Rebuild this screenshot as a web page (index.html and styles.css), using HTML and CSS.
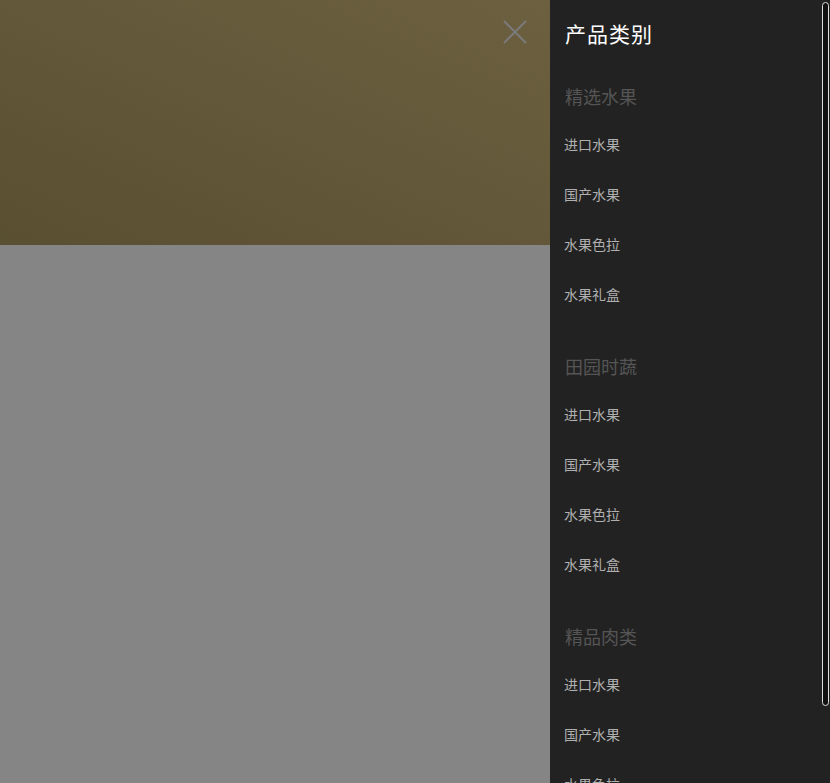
FILE: index.html
```html
<!DOCTYPE html>
<html lang="zh-CN">
<head>
    <meta charset="UTF-8">
    <meta name="viewport" content="width=device-width, initial-scale=1.0">
    <title>产品类别</title>
    <link rel="stylesheet" href="styles.css">
</head>
<body>
    <div class="page">
        <div class="backdrop">
            <div class="banner"></div>
            <div class="filler"></div>
            <button class="close-btn" type="button" aria-label="关闭">
                <svg width="26" height="26" viewBox="0 0 26 26">
                    <path d="M2 2 L24 24 M24 2 L2 24" stroke="#7a7a7a" stroke-width="2" fill="none"/>
                </svg>
            </button>
        </div>

        <div class="sidebar">
            <h2 class="side-title">产品类别</h2>

            <div class="group">
                <h3 class="group-title">精选水果</h3>
                <a class="item" href="#">进口水果</a>
                <a class="item" href="#">国产水果</a>
                <a class="item" href="#">水果色拉</a>
                <a class="item" href="#">水果礼盒</a>
            </div>

            <div class="group">
                <h3 class="group-title">田园时蔬</h3>
                <a class="item" href="#">进口水果</a>
                <a class="item" href="#">国产水果</a>
                <a class="item" href="#">水果色拉</a>
                <a class="item" href="#">水果礼盒</a>
            </div>

            <div class="group">
                <h3 class="group-title">精品肉类</h3>
                <a class="item" href="#">进口水果</a>
                <a class="item" href="#">国产水果</a>
                <a class="item" href="#">水果色拉</a>
                <a class="item" href="#">水果礼盒</a>
            </div>

            <div class="scroll-thumb"></div>
        </div>
    </div>
</body>
</html>
```

FILE: styles.css
```css
html, body {
    margin: 0;
    height: 100%;
    overflow: hidden;
}
body {
    font-family: "Noto Sans CJK SC", "Noto Sans", sans-serif;
    background-color: #858585;
}
.page {
    display: flex;
    height: 100%;
}
.backdrop {
    flex: 1;
    display: flex;
    flex-direction: column;
    position: relative;
}
.banner {
    height: 245px;
    background: linear-gradient(to top right, #594f31, #6c6040);
}
.filler {
    flex: 1;
    background-color: #858585;
}
.close-btn {
    position: absolute;
    top: 19px;
    right: 22px;
    padding: 0;
    border: 0;
    background: none;
    line-height: 0;
    cursor: pointer;
}
.sidebar {
    width: 280px;
    position: relative;
    background-color: #222222;
    padding-left: 14px;
    box-sizing: border-box;
}
.side-title {
    margin: 0 0 7px 1px;
    font-size: 21px;
    font-weight: normal;
    letter-spacing: 1px;
    line-height: 66px;
    color: #ffffff;
}
.group {
    padding-bottom: 24px;
}
.group-title {
    margin: 0 0 0 1px;
    font-size: 18px;
    font-weight: normal;
    line-height: 46px;
    color: #555555;
}
.item {
    display: block;
    font-size: 14px;
    line-height: 50px;
    color: #b0b0b0;
    text-decoration: none;
}
.scroll-thumb {
    position: absolute;
    top: 2px;
    right: 1px;
    width: 5px;
    height: 702px;
    border: 1px solid #dddddd;
    border-radius: 4px;
    background-color: #111111;
}
```
